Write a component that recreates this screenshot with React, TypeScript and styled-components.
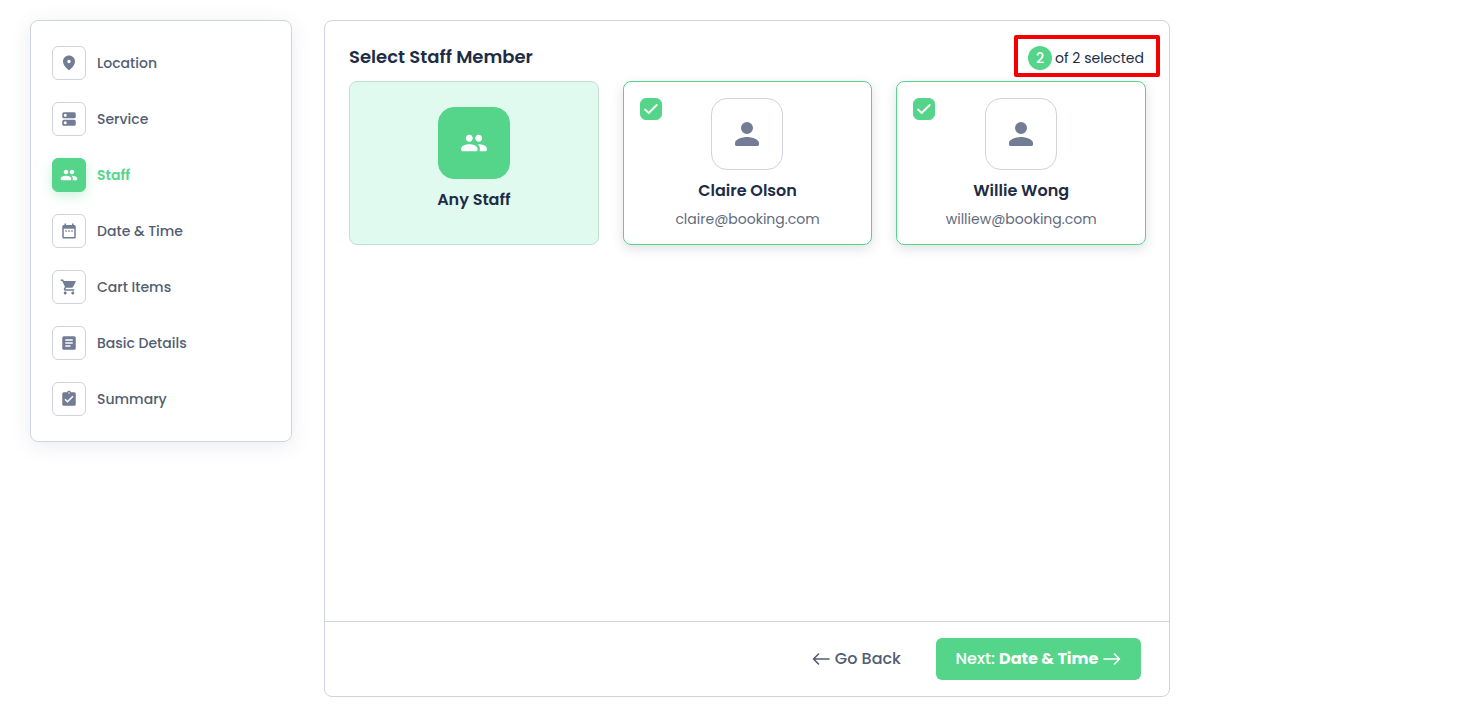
import React from "react";
import styled, { createGlobalStyle, css } from "styled-components";

const green = "#55d58a";
const line = "#cfd3e0";
const slate = "#727c94";
const ink = "#202c45";

const GlobalStyle = createGlobalStyle`
  *, *::before, *::after { box-sizing: border-box; }
  body { margin: 0; background: #fff; color: ${ink}; font-family: Poppins, Inter, "Open Sans", sans-serif; }
  button { font-family: inherit; cursor: pointer; }
  h2, h3, p { margin: 0; }
  svg { display: block; flex: none; }
`;

const Page = styled.div`
  display: flex;
  align-items: flex-start;
  gap: 32px;
  max-width: 1200px;
  min-height: 100vh;
  padding: 20px 30px 29px;
`;

const Sidebar = styled.nav`
  flex: 0 0 262px;
  padding: 25px 21px;
  border: 1px solid ${line};
  border-radius: 8px;
  box-shadow: 0 4px 20px rgba(90, 100, 140, 0.12);
`;

const StepList = styled.ul`
  display: flex;
  flex-direction: column;
  gap: 22px;
  margin: 0;
  padding: 0;
  list-style: none;
`;

const StepLink = styled.a<{ $active?: boolean }>`
  display: flex;
  align-items: center;
  gap: 11px;
  color: ${(p) => (p.$active ? green : "#535d71")};
  font-size: 14px;
  font-weight: ${(p) => (p.$active ? 600 : 500)};
  line-height: 20px;
  text-decoration: none;
`;

const StepIcon = styled.span<{ $active?: boolean }>`
  display: grid;
  place-items: center;
  width: 34px;
  height: 34px;
  border: 1px solid ${line};
  border-radius: 6px;
  color: ${slate};
  ${(p) =>
    p.$active &&
    css`
      border-color: ${green};
      background: ${green};
      color: #fff;
      box-shadow: 0 4px 12px rgba(85, 214, 138, 0.3);
    `}
`;

const Panel = styled.main`
  display: flex;
  flex: 1;
  flex-direction: column;
  align-self: stretch;
  min-width: 0;
  border: 1px solid ${line};
  border-radius: 8px;
`;

const Content = styled.section`
  flex: 1;
  padding: 14px 23px 24px 24px;
`;

const Header = styled.header`
  display: flex;
  align-items: center;
  justify-content: space-between;
  margin-right: -14px;
  margin-bottom: 4px;
`;

const Title = styled.h2`
  padding-top: 2px;
  font-size: 18px;
  font-weight: 600;
  line-height: 28px;
`;

const Counter = styled.p`
  display: flex;
  align-items: center;
  gap: 3px;
  height: 42px;
  padding: 4px 12px 0 10px;
  border: 4px solid #f50000;
  border-radius: 2px;
  font-size: 14px;
  line-height: 20px;
`;

const CountBadge = styled.span`
  display: grid;
  place-items: center;
  width: 24px;
  height: 24px;
  border-radius: 50%;
  background: ${green};
  color: #fff;
  font-weight: 500;
`;

const StaffGrid = styled.div`
  display: grid;
  grid-template-columns: repeat(3, 1fr);
  gap: 24px;
`;

const cardBase = css`
  position: relative;
  display: flex;
  flex-direction: column;
  align-items: center;
  min-height: 164px;
  border-radius: 8px;
  color: ${ink};
  cursor: pointer;
`;

const AnyCard = styled.button`
  ${cardBase}
  justify-content: center;
  padding: 0 0 8px;
  border: 1px solid #c0e0d2;
  background: #e1faef;
`;

const StaffCard = styled.label`
  ${cardBase}
  padding: 16px 16px 12px;
  border: 1px solid ${green};
  background: #fff;
  box-shadow: 0 4px 12px rgba(60, 70, 100, 0.16);
`;

const Avatar = styled.span<{ $filled?: boolean }>`
  display: grid;
  place-items: center;
  width: 72px;
  height: 72px;
  margin-bottom: 9px;
  border: 1px solid ${(p) => (p.$filled ? green : line)};
  border-radius: 16px;
  background: ${(p) => (p.$filled ? green : "#fff")};
  color: ${(p) => (p.$filled ? "#fff" : slate)};
`;

const Name = styled.span`
  font-size: 16px;
  font-weight: 600;
  line-height: 24px;
`;

const Email = styled.span`
  margin-top: 4px;
  color: #626b7d;
  font-size: 14px;
  line-height: 24px;
`;

const CheckSlot = styled.span`
  position: absolute;
  top: 16px;
  left: 16px;
  display: grid;
  color: #fff;
  > * { grid-area: 1 / 1; }
`;

const Check = styled.input`
  appearance: none;
  width: 22px;
  height: 22px;
  margin: 0;
  border: 1px solid ${line};
  border-radius: 6px;
  background: #fff;
  &:checked { border-color: ${green}; background: ${green}; }
`;

const Footer = styled.footer`
  display: flex;
  align-items: center;
  justify-content: flex-end;
  gap: 16px;
  padding: 16px 28px;
  border-top: 1px solid ${line};
`;

const FooterButton = styled.button<{ $primary?: boolean }>`
  display: flex;
  align-items: center;
  justify-content: center;
  gap: 5px;
  min-width: ${(p) => (p.$primary ? "205px" : "0")};
  height: 42px;
  padding: 0 19px;
  border: 0;
  border-radius: 6px;
  background: ${(p) => (p.$primary ? green : "transparent")};
  color: ${(p) => (p.$primary ? "#fff" : "#535d71")};
  font-size: 16px;
  font-weight: 500;
  line-height: 24px;
  white-space: pre;
`;

const NextStep = styled.strong`
  font-weight: 700;
`;

const paths = {
  location: "M12 2C7.8 2 4 5.22 4 10.2c0 3.18 2.45 6.92 7.34 11.23.38.33.95.33 1.33 0C17.55 17.12 20 13.38 20 10.2 20 5.22 16.2 2 12 2zm0 10.300a2.300 2.300 0 1 1 0-4.600 2.300 2.300 0 0 1 0 4.600z",
  service: "M19 13H5a2 2 0 0 0-2 2v4c0 1.1.9 2 2 2h14a2 2 0 0 0 2-2v-4a2 2 0 0 0-2-2zM7 19a2 2 0 1 1 0-4 2 2 0 0 1 0 4zM19 3H5a2 2 0 0 0-2 2v4c0 1.1.9 2 2 2h14a2 2 0 0 0 2-2V5a2 2 0 0 0-2-2zM7 9a2 2 0 1 1 0-4 2 2 0 0 1 0 4z",
  staff: "M16 11c1.66 0 2.990-1.340 2.990-3S17.66 5 16 5s-3 1.340-3 3 1.340 3 3 3zM8 11c1.66 0 2.990-1.340 2.990-3S9.66 5 8 5 5 6.340 5 8s1.340 3 3 3zM8 13c-2.330 0-7 1.170-7 3.500V18c0 .55.45 1 1 1h12c.55 0 1-.45 1-1v-1.500C15 14.170 10.330 13 8 13zM16 13c-.29 0-.62.02-.97.05C16.190 13.890 17 15.020 17 16.500V18c0 .35-.07.69-.18 1H22c.55 0 1-.45 1-1v-1.500C23 14.170 18.330 13 16 13z",
  date: "M9 11H7v2h2v-2zm4 0h-2v2h2v-2zm4 0h-2v2h2v-2zm2-7h-1V2h-2v2H8V2H6v2H5a2 2 0 0 0-2 2v14c0 1.1.9 2 2 2h14a2 2 0 0 0 2-2V6a2 2 0 0 0-2-2zm0 16H5V9h14v11z",
  cart: "M7 18c-1.1 0-1.99.9-1.99 2S5.9 22 7 22s2-.9 2-2-.9-2-2-2zM1 2v2h2l3.6 7.59-1.35 2.45c-.16.28-.25.61-.25.96 0 1.1.9 2 2 2h12v-2H7.42c-.14 0-.25-.11-.25-.25l.03-.12.9-1.63h7.45c.75 0 1.41-.41 1.75-1.03l3.58-6.49A1 1 0 0 0 20 4H5.21l-.94-2H1zm16 16c-1.1 0-1.99.9-1.99 2s.89 2 1.99 2 2-.9 2-2-.9-2-2-2z",
  details: "M19 3H5a2 2 0 0 0-2 2v14c0 1.1.9 2 2 2h14a2 2 0 0 0 2-2V5a2 2 0 0 0-2-2zm-5 14H7v-2h7v2zm3-4H7v-2h10v2zm0-4H7V7h10v2z",
  summary: "M19 3h-4.18C14.4 1.84 13.3 1 12 1s-2.4.84-2.82 2H5a2 2 0 0 0-2 2v14c0 1.1.9 2 2 2h14a2 2 0 0 0 2-2V5a2 2 0 0 0-2-2zm-7 0a1 1 0 1 1 0 2 1 1 0 0 1 0-2zm-2 14-4-4 1.41-1.41L10 14.17l6.59-6.59L18 9l-8 8z",
  person: "M12 12a4 4 0 1 0 0-8 4 4 0 0 0 0 8zm0 2c-2.67 0-8 1.34-8 4v1c0 .55.45 1 1 1h14c.55 0 1-.45 1-1v-1c0-2.66-5.33-4-8-4z",
};

type IconName = keyof typeof paths;

const Icon = ({ name, size }: { name: IconName; size: number }) => (
  <svg width={size} height={size} viewBox="0 0 24 24" fill="currentColor" fillRule="evenodd" aria-hidden="true">
    <path d={paths[name]} />
  </svg>
);

const Arrow = ({ back }: { back?: boolean }) => (
  <svg width="18" height="14" viewBox="0 0 18 14" fill="none" stroke="currentColor" strokeWidth="1.6" strokeLinecap="round" strokeLinejoin="round" aria-hidden="true">
    <path d={back ? "M17 7H1.5M6.5 2l-5 5 5 5" : "M1 7h15.5M11.5 2l5 5-5 5"} />
  </svg>
);

const steps: { icon: IconName; label: string }[] = [
  { icon: "location", label: "Location" },
  { icon: "service", label: "Service" },
  { icon: "staff", label: "Staff" },
  { icon: "date", label: "Date & Time" },
  { icon: "cart", label: "Cart Items" },
  { icon: "details", label: "Basic Details" },
  { icon: "summary", label: "Summary" },
];

const staff = [
  { name: "Claire Olson", email: "claire@booking.com" },
  { name: "Willie Wong", email: "williew@booking.com" },
];

export default function App() {
  const [picked, setPicked] = React.useState(staff.map((s) => s.email));
  const toggle = (email: string) =>
    setPicked((p) => (p.includes(email) ? p.filter((e) => e !== email) : [...p, email]));

  return (
    <>
      <GlobalStyle />
      <Page>
        <Sidebar aria-label="Booking steps">
          <StepList>
            {steps.map(({ icon, label }) => {
              const active = icon === "staff";
              return (
                <li key={icon}>
                  <StepLink href={`#${icon}`} $active={active} aria-current={active ? "step" : undefined}>
                    <StepIcon $active={active}>
                      <Icon name={icon} size={18} />
                    </StepIcon>
                    {label}
                  </StepLink>
                </li>
              );
            })}
          </StepList>
        </Sidebar>
        <Panel>
          <Content>
            <Header>
              <Title>Select Staff Member</Title>
              <Counter>
                <CountBadge>{picked.length}</CountBadge>
                of 2 selected
              </Counter>
            </Header>
            <StaffGrid>
              <AnyCard type="button">
                <Avatar $filled>
                  <Icon name="staff" size={28} />
                </Avatar>
                <Name>Any Staff</Name>
              </AnyCard>
              {staff.map(({ name, email }) => (
                <StaffCard key={email}>
                  <CheckSlot>
                    <Check type="checkbox" checked={picked.includes(email)} onChange={() => toggle(email)} />
                    <svg width="22" height="22" viewBox="0 0 22 22" fill="none" stroke="currentColor" strokeWidth="1.8" strokeLinecap="round" strokeLinejoin="round" aria-hidden="true">
                      <path d="M5 11.5l3.700 3.500 8-8" />
                    </svg>
                  </CheckSlot>
                  <Avatar>
                    <Icon name="person" size={36} />
                  </Avatar>
                  <Name>{name}</Name>
                  <Email>{email}</Email>
                </StaffCard>
              ))}
            </StaffGrid>
          </Content>
          <Footer>
            <FooterButton type="button">
              <Arrow back />
              Go Back
            </FooterButton>
            <FooterButton type="button" $primary>
              <span>
                Next: <NextStep>Date &amp; Time</NextStep>
              </span>
              <Arrow />
            </FooterButton>
          </Footer>
        </Panel>
      </Page>
    </>
  );
}
